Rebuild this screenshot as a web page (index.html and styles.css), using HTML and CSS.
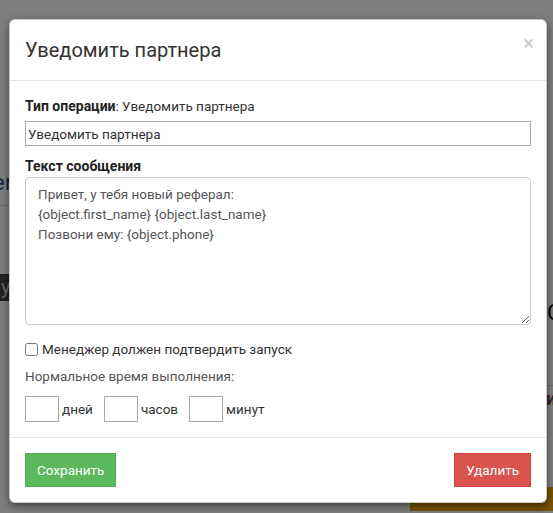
FILE: index.html
```html
<!DOCTYPE html>
<html lang="ru">
<head>
    <meta charset="UTF-8">
    <title>Уведомить партнера</title>
    <link rel="stylesheet" href="styles.css">
</head>
<body>
    <!-- page behind the dialog -->
    <div class="page">
        <div class="bg-text bg-left">ем</div>
        <div class="bg-line bg-line-left"></div>
        <div class="bg-bar">у</div>
        <div class="bg-text bg-right">С</div>
        <div class="bg-line bg-line-right"></div>
        <div class="bg-text bg-right2">и</div>
        <div class="bg-orange"></div>
    </div>
    <div class="backdrop"></div>

    <div class="modal">
        <div class="modal-header">
            <h4 class="modal-title">Уведомить партнера</h4>
            <span class="close">&times;</span>
        </div>
        <div class="modal-body">
            <div class="op-type"><b>Тип операции</b>: Уведомить партнера</div>
            <input class="name-input" type="text" value="Уведомить партнера">

            <label class="field-label">Текст сообщения</label>
            <textarea class="message">Привет, у тебя новый реферал:
{object.first_name} {object.last_name}
Позвони ему: {object.phone}</textarea>

            <label class="check-row">
                <input type="checkbox"> Менеджер должен подтвердить запуск
            </label>

            <div class="time-label">Нормальное время выполнения:</div>
            <div class="time-row">
                <input class="time-input" type="text"> <span>дней</span>
                <input class="time-input" type="text"> <span>часов</span>
                <input class="time-input" type="text"> <span>минут</span>
            </div>
        </div>
        <div class="modal-footer">
            <button class="btn btn-success">Сохранить</button>
            <button class="btn btn-danger">Удалить</button>
        </div>
    </div>
</body>
</html>
```

FILE: styles.css
```css
body {
    margin: 0;
    padding: 0;
    width: 553px;
    height: 513px;
    overflow: hidden;
    background-color: #fff;
    font-family: Roboto, "Open Sans", sans-serif;
    font-size: 13.5px;
    color: #333;
}
.page {
    position: relative;
    width: 553px;
    height: 513px;
}
.bg-text {
    position: absolute;
    font-size: 22px;
    color: #2a4a8a;
}
.bg-left {
    left: -7px;
    top: 170px;
}
.bg-line {
    position: absolute;
    height: 1px;
    background-color: #ddd;
}
.bg-line-left {
    left: 0;
    top: 205px;
    width: 12px;
}
.bg-bar {
    position: absolute;
    left: 0;
    top: 274px;
    width: 12px;
    height: 27px;
    background-color: #444;
    color: #ccc;
    font-size: 20px;
    line-height: 27px;
    padding-left: 1px;
}
.bg-right {
    left: 547px;
    top: 300px;
    color: #111;
}
.bg-line-right {
    left: 547px;
    top: 385px;
    width: 10px;
}
.bg-right2 {
    left: 546px;
    top: 388px;
    font-size: 18px;
    font-weight: bold;
    color: #555;
}
.bg-orange {
    position: absolute;
    left: 410px;
    top: 487px;
    width: 143px;
    height: 24px;
    background-color: #f0a400;
}
.backdrop {
    position: absolute;
    left: 0;
    top: 0;
    width: 553px;
    height: 513px;
    background-color: rgba(0, 0, 0, 0.5);
}
.modal {
    position: absolute;
    left: 9px;
    top: 19px;
    width: 536px;
    background-color: #fff;
    border: 1px solid rgba(0, 0, 0, 0.2);
    border-radius: 6px;
    box-shadow: 0 3px 9px rgba(0, 0, 0, 0.5);
}
.modal-header {
    display: flex;
    justify-content: space-between;
    align-items: flex-start;
    padding: 15px;
    border-bottom: 1px solid #e5e5e5;
}
.modal-title {
    margin: 0;
    font-size: 20px;
    font-weight: normal;
    line-height: 30px;
    color: #333;
}
.close {
    font-size: 20px;
    line-height: 16px;
    margin-top: 0;
    margin-right: -3px;
    color: #c8c8c8;
    font-weight: normal;
}
.modal-body {
    padding: 15px;
}
.op-type {
    line-height: 20px;
    margin-bottom: 5px;
}
.op-type b,
.field-label {
    font-size: 14px;
    font-weight: bold;
    color: #222;
}
.name-input {
    display: block;
    box-sizing: border-box;
    width: 100%;
    height: 25px;
    margin: 0;
    padding: 0 2px;
    border: 1px solid #a9a9a9;
    font-family: inherit;
    font-size: 13.5px;
    color: #333;
}
.field-label {
    display: block;
    line-height: 20px;
    margin-top: 10px;
    margin-bottom: 1px;
}
.message {
    display: block;
    box-sizing: border-box;
    width: 100%;
    height: 148px;
    margin: 0;
    padding: 6px 12px;
    border: 1px solid #ccc;
    border-radius: 4px;
    font-family: inherit;
    font-size: 13.5px;
    line-height: 20px;
    color: #555;
    resize: vertical;
}
.check-row {
    display: flex;
    align-items: center;
    gap: 4px;
    margin-top: 14px;
    line-height: 20px;
    color: #333;
}
.check-row input {
    margin: 0;
    width: 13px;
    height: 13px;
}
.time-label {
    margin-top: 7px;
    line-height: 20px;
    color: #555;
}
.time-row {
    display: flex;
    align-items: center;
    margin-top: 10px;
    color: #333;
}
.time-input {
    box-sizing: border-box;
    width: 34px;
    height: 26px;
    margin: 0 3px 0 0;
    border: 1px solid #a9a9a9;
}
.time-row span {
    margin-right: 11px;
}
.modal-footer {
    display: flex;
    justify-content: space-between;
    padding: 15px;
    border-top: 1px solid #e5e5e5;
}
.btn {
    height: 34px;
    padding: 6px 11px;
    font-family: inherit;
    font-size: 13.5px;
    color: #fff;
    border: 1px solid transparent;
    border-radius: 0;
}
.btn-success {
    background-color: #5cb85c;
    border-color: #4cae4c;
}
.btn-danger {
    background-color: #d9534f;
    border-color: #d43f3a;
}
```
